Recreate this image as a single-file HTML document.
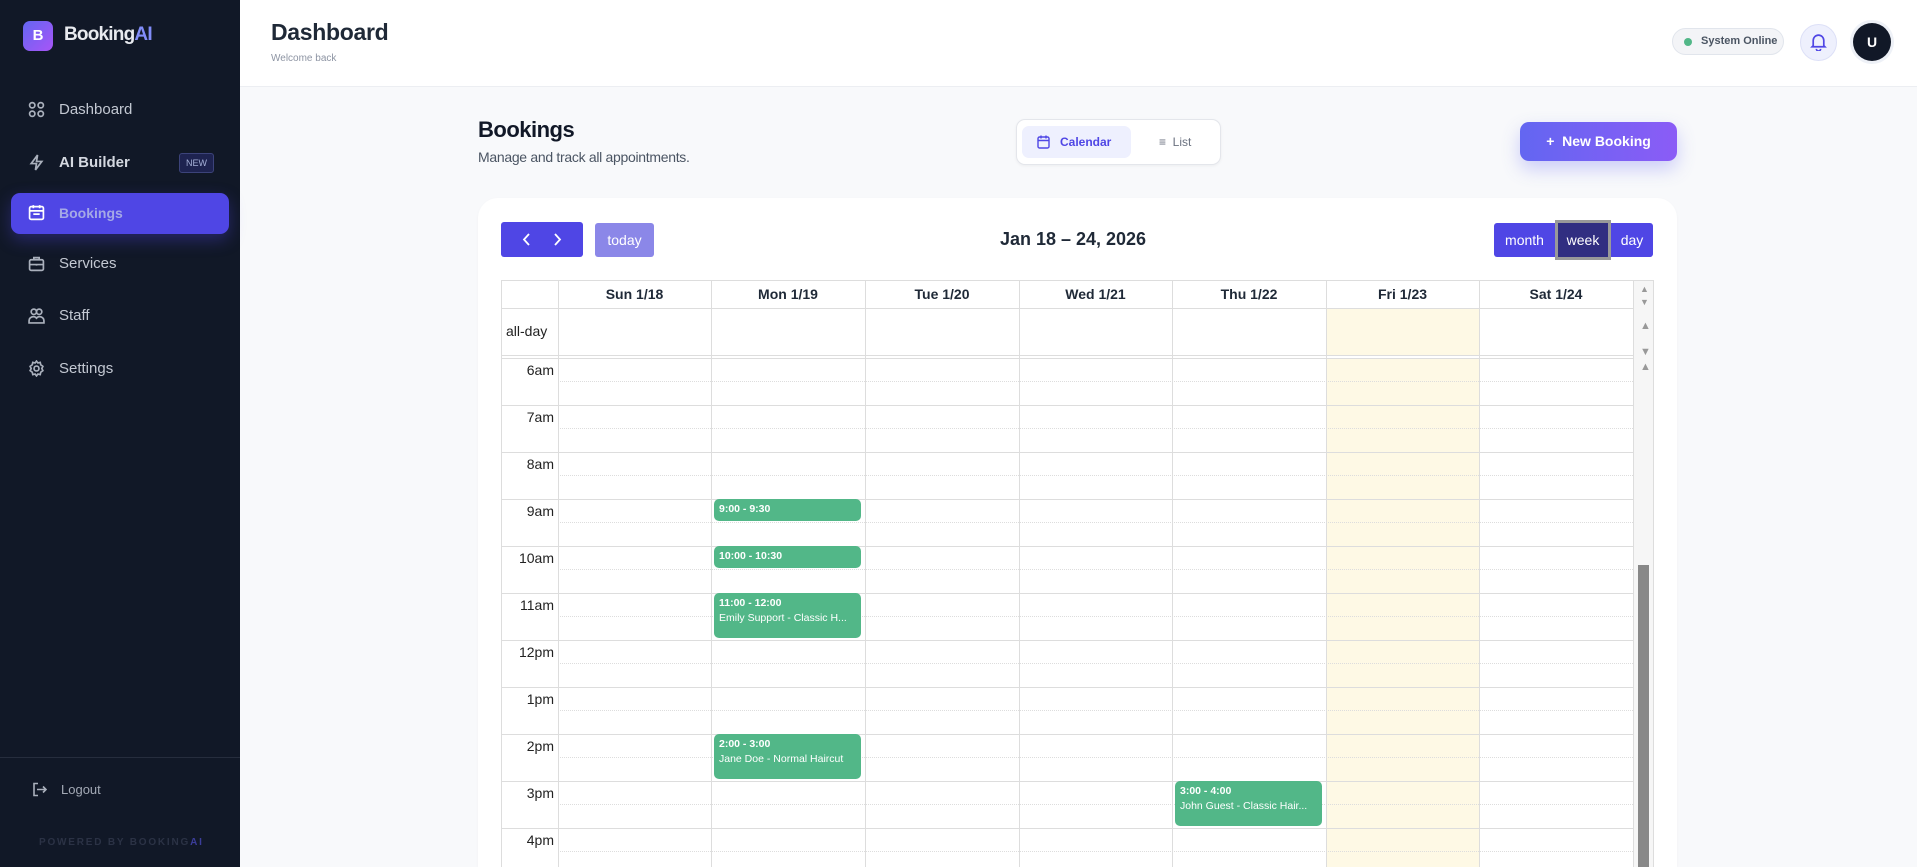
<!DOCTYPE html>
<html style="width:1917px;height:867px;overflow:hidden"><head><meta charset="utf-8"><style>
*{box-sizing:border-box;margin:0;padding:0}
body{width:1917px;height:867px;overflow:hidden;background:#f8f9fb;font-family:"Liberation Sans",sans-serif;position:relative}
.a{position:absolute}
.sb{left:0;top:0;width:240px;height:867px;background:#111827}
.nav{left:28px;color:#c3c8d2;font-size:15px;display:flex;align-items:center;gap:14px}
.nav svg{width:17px;height:17px;fill:none;stroke:#aab0bc;stroke-width:1.6}
.hl{background:#ddd}
.vl{background:#ddd;width:1px}
.ev{background:#52b788;border-radius:5px;color:#fff;font-size:10.5px;padding:3px 5px;line-height:15px;overflow:hidden;white-space:nowrap}
.ev b{display:block}
.tl{font-size:14px;color:#222;width:52px;text-align:right;left:502px}
.dh{font-size:14px;font-weight:bold;color:#1f2937;text-align:center;top:286px}
</style></head><body>
<div class="a sb"></div>
<div class="a" style="left:23px;top:21px;width:30px;height:30px;border-radius:7px;background:linear-gradient(135deg,#6366f1,#a855f7);color:#fff;font-weight:bold;font-size:15px;text-align:center;line-height:30px">B</div>
<div class="a" style="left:64px;top:24px;font-size:19px;font-weight:bold;color:#e8eaef;letter-spacing:-0.8px">Booking<span style="color:#818cf8">AI</span></div>

<div class="a nav" style="top:101px"><svg viewBox="0 0 16 16"><circle cx="4" cy="4" r="2.5"/><circle cx="12" cy="4" r="2.5"/><circle cx="4" cy="12" r="2.5"/><circle cx="12" cy="12" r="2.5"/></svg>Dashboard</div>
<div class="a nav" style="top:154px;font-weight:bold;color:#d4d8e0"><svg viewBox="0 0 16 16"><path d="M9 1L3 9h5l-1 6 6-8H8z"/></svg>AI Builder</div>
<div class="a" style="left:179px;top:153px;width:35px;height:20px;border:1px solid #3c437a;background:#1e2350;border-radius:3px;color:#a5b0d8;font-size:9px;text-align:center;line-height:18px">NEW</div>
<div class="a" style="left:11px;top:193px;width:218px;height:41px;background:#4f46e5;border-radius:9px;box-shadow:0 6px 16px rgba(79,70,229,.35)"></div>
<div class="a nav" style="top:204px;font-weight:bold;color:#a5a9e6;font-size:14px"><svg viewBox="0 0 16 16" style="stroke:#fff"><rect x="1.5" y="2.5" width="13" height="12" rx="1.5"/><path d="M1.5 6.5h13M5 1v3M11 1v3M5 9.5h6"/></svg>Bookings</div>
<div class="a nav" style="top:255px"><svg viewBox="0 0 16 16"><rect x="1.5" y="4.5" width="13" height="10" rx="1.5"/><path d="M5.5 4.5V2.5h5v2M1.5 9h13M8 8.5v1.5"/></svg>Services</div>
<div class="a nav" style="top:307px"><svg viewBox="0 0 16 16"><circle cx="5.5" cy="4.5" r="2.5"/><circle cx="10.5" cy="4.5" r="2.5"/><path d="M1 15v-2a4 4 0 0 1 7-2.5A4 4 0 0 1 15 13v2z"/></svg>Staff</div>
<div class="a nav" style="top:360px"><svg viewBox="0 0 16 16"><circle cx="8" cy="8" r="2.3"/><path d="M8 1l1.3 1.8 2.2-.5.5 2.2L14 6l-1 2 1 2-2 1.5-.5 2.2-2.2-.5L8 15l-1.3-1.8-2.2.5-.5-2.2L2 10l1-2-1-2 2-1.5.5-2.2 2.2.5z"/></svg>Settings</div>
<div class="a" style="left:0;top:757px;width:240px;height:1px;background:#262d3d"></div>
<div class="a nav" style="left:31px;top:781px;font-size:13px;color:#a3a9b5"><svg viewBox="0 0 16 16" style="width:16px"><path d="M7 2H3v12h4M6 8h9M12 5l3 3-3 3"/></svg>Logout</div>
<div class="a" style="left:39px;top:837px;font-size:10px;font-weight:bold;letter-spacing:1.8px;color:#2b3245">POWERED BY BOOKING<span style="color:#3b3d9a">AI</span></div>

<div class="a" style="left:240px;top:0;width:1677px;height:87px;background:#fff;border-bottom:1px solid #eceef2"></div>
<div class="a" style="left:271px;top:19px;font-size:23px;font-weight:bold;color:#1f2937;letter-spacing:-0.3px">Dashboard</div>
<div class="a" style="left:271px;top:53px;font-size:10px;color:#8d94a3">Welcome back</div>
<div class="a" style="left:1672px;top:28px;width:112px;height:27px;border:1px solid #e1e5ec;background:#f3f4f7;border-radius:14px;font-size:11px;font-weight:bold;color:#4b5563;line-height:25px;padding-left:28px">System Online</div>
<div class="a" style="left:1684px;top:38px;width:8px;height:8px;border-radius:50%;background:#52b788"></div>
<div class="a" style="left:1800px;top:24px;width:37px;height:37px;border-radius:50%;background:#eef0fd;border:1px solid #dde0f7"></div>
<svg class="a" style="left:1810px;top:33px" width="17" height="18" viewBox="0 0 16 17" fill="none" stroke="#4f46e5" stroke-width="1.6"><path d="M3 12V7a5 5 0 0 1 10 0v5l1 1H2zM6 15a2 2 0 0 0 4 0"/></svg>
<div class="a" style="left:1850px;top:20px;width:44px;height:44px;border-radius:50%;background:#eef1f7"></div>
<div class="a" style="left:1853px;top:23px;width:38px;height:38px;border-radius:50%;background:#111827;color:#fff;font-weight:bold;font-size:14px;text-align:center;line-height:38px">U</div>

<div class="a" style="left:478px;top:117px;font-size:22px;font-weight:bold;color:#111827;letter-spacing:-0.5px">Bookings</div>
<div class="a" style="left:478px;top:149px;font-size:14px;color:#4b5563;letter-spacing:-0.3px">Manage and track all appointments.</div>
<div class="a" style="left:1016px;top:119px;width:205px;height:46px;background:#fff;border:1px solid #e4e6eb;border-radius:9px;box-shadow:0 1px 3px rgba(0,0,0,.05)"></div>
<div class="a" style="left:1022px;top:126px;width:109px;height:32px;background:#eef0fe;border-radius:7px;font-size:12px;font-weight:bold;color:#4f46e5;line-height:32px;padding-left:38px">Calendar</div>
<svg class="a" style="left:1037px;top:135px" width="13" height="14" viewBox="0 0 13 14" fill="none" stroke="#4f46e5" stroke-width="1.4"><rect x="1" y="2" width="11" height="11" rx="1.5"/><path d="M1 5.5h11M4 0.5v3M9 0.5v3"/></svg>
<div class="a" style="left:1159px;top:135px;font-size:12px;color:#6b7280">&#8801;&nbsp; List</div>
<div class="a" style="left:1520px;top:122px;width:157px;height:39px;border-radius:9px;background:linear-gradient(90deg,#6366f1,#8b5cf6);box-shadow:0 8px 18px rgba(99,102,241,.3);color:#fff;font-weight:bold;font-size:14px;line-height:39px;text-align:center">+&nbsp; New Booking</div>

<div class="a" style="left:478px;top:198px;width:1199px;height:669px;background:#fff;border-radius:20px 20px 0 0;box-shadow:0 1px 3px rgba(0,0,0,.03)"></div>
<div class="a" style="left:501px;top:222px;width:82px;height:35px;background:#4f46e5;border-radius:3px"></div>
<svg class="a" style="left:501px;top:222px" width="82" height="35" fill="none" stroke="#fff" stroke-width="1.8"><path d="M28 12l-5 5.5 5 5.5M54 12l5 5.5-5 5.5"/></svg>
<div class="a" style="left:595px;top:223px;width:59px;height:34px;background:#8b87e8;border-radius:3px;color:#fff;font-size:14px;text-align:center;line-height:34px">today</div>
<div class="a" style="left:900px;top:229px;width:346px;text-align:center;font-size:18px;font-weight:bold;color:#1f2937">Jan 18 – 24, 2026</div>
<div class="a" style="left:1494px;top:223px;width:159px;height:34px;background:#4f46e5;border-radius:3px"></div>
<div class="a" style="left:1555px;top:220px;width:56px;height:40px;background:#312e81;border:3px solid #999"></div>
<div class="a" style="left:1494px;top:223px;width:61px;text-align:center;line-height:34px;color:#fff;font-size:14px">month</div>
<div class="a" style="left:1555px;top:223px;width:56px;text-align:center;line-height:34px;color:#fff;font-size:14px">week</div>
<div class="a" style="left:1611px;top:223px;width:42px;text-align:center;line-height:34px;color:#fff;font-size:14px">day</div>

<div class="a" style="left:1327px;top:309px;width:152px;height:46px;background:#fef9e5"></div>
<div class="a" style="left:1327px;top:358px;width:152px;height:509px;background:#fef9e5"></div>
<div class="a hl" style="left:501px;top:280px;width:1152px;height:1px"></div>
<div class="a hl" style="left:501px;top:308px;width:1132px;height:1px"></div>
<div class="a hl" style="left:501px;top:355px;width:1152px;height:1px"></div>
<div class="a hl" style="left:501px;top:358px;width:1152px;height:1px"></div>
<div class="a" style="left:1633px;top:281px;width:20px;height:586px;background:#f6f6f6"></div>
<div class="a" style="left:1638px;top:565px;width:11px;height:302px;background:#888"></div>
<div class="a" style="left:1640px;top:283px;font-size:9px;color:#999;line-height:13px">▲<br>▼</div>
<div class="a" style="left:1640px;top:313px;font-size:11px;color:#999;line-height:26px">▲<br>▼</div>
<div class="a" style="left:1640px;top:361px;font-size:11px;color:#999">▲</div>
<div id="g"></div>
<div class="a vl" style="left:501px;top:280px;height:587px"></div>
<div class="a vl" style="left:558px;top:280px;height:587px"></div>
<div class="a vl" style="left:711px;top:280px;height:587px"></div>
<div class="a vl" style="left:865px;top:280px;height:587px"></div>
<div class="a vl" style="left:1019px;top:280px;height:587px"></div>
<div class="a vl" style="left:1172px;top:280px;height:587px"></div>
<div class="a vl" style="left:1326px;top:280px;height:587px"></div>
<div class="a vl" style="left:1479px;top:280px;height:587px"></div>
<div class="a vl" style="left:1633px;top:280px;height:587px"></div>
<div class="a vl" style="left:1653px;top:280px;height:587px"></div>
<div class="a dh" style="left:558px;width:153px">Sun 1/18</div>
<div class="a dh" style="left:711px;width:154px">Mon 1/19</div>
<div class="a dh" style="left:865px;width:154px">Tue 1/20</div>
<div class="a dh" style="left:1019px;width:153px">Wed 1/21</div>
<div class="a dh" style="left:1172px;width:154px">Thu 1/22</div>
<div class="a dh" style="left:1326px;width:153px">Fri 1/23</div>
<div class="a dh" style="left:1479px;width:154px">Sat 1/24</div>
<div class="a" style="left:506px;top:323px;font-size:14px;color:#222">all-day</div>

<div class="a ev" style="left:714px;top:499px;width:147px;height:22px"><b>9:00 - 9:30</b></div>
<div class="a ev" style="left:714px;top:546px;width:147px;height:22px"><b>10:00 - 10:30</b></div>
<div class="a ev" style="left:714px;top:593px;width:147px;height:45px"><b>11:00 - 12:00</b>Emily Support - Classic H...</div>
<div class="a ev" style="left:714px;top:734px;width:147px;height:45px"><b>2:00 - 3:00</b>Jane Doe - Normal Haircut</div>
<div class="a ev" style="left:1175px;top:781px;width:147px;height:45px"><b>3:00 - 4:00</b>John Guest - Classic Hair...</div>

<script>
var g=document.getElementById('g'),h='',labels=['6am','7am','8am','9am','10am','11am','12pm','1pm','2pm','3pm','4pm'];
for(var i=0;i<11;i++){var y=358+i*47;
if(i>0)h+='<div class="a hl" style="left:501px;top:'+y+'px;width:1132px;height:1px"></div>';
if(y+23<867)h+='<div class="a" style="left:558px;top:'+(y+23)+'px;width:1075px;border-top:1px dotted #ddd"></div>';
h+='<div class="a tl" style="top:'+(y+4)+'px">'+labels[i]+'</div>';}
g.innerHTML=h;
</script>
</body></html>
